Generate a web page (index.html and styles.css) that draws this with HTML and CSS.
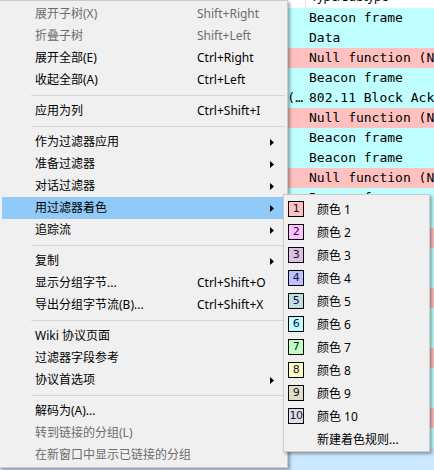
FILE: index.html
```html
<!DOCTYPE html>
<html lang="zh-CN">
<head>
<meta charset="utf-8">
<title>Context menu</title>
<link rel="stylesheet" href="styles.css">
</head>
<body>
<div class="list">
  <div class="header"><span class="hcell">Type/Subtype</span></div>
  <div class="row cyan"><span class="c1"></span><span class="c2">Beacon frame</span></div>
  <div class="row cyan"><span class="c1"></span><span class="c2">Data</span></div>
  <div class="row pink"><span class="c1"></span><span class="c2">Null function (No data)</span></div>
  <div class="row cyan"><span class="c1"></span><span class="c2">Beacon frame</span></div>
  <div class="row cyan"><span class="c1">(…</span><span class="c2">802.11 Block Ack</span></div>
  <div class="row pink"><span class="c1"></span><span class="c2">Null function (No data)</span></div>
  <div class="row cyan"><span class="c1"></span><span class="c2">Beacon frame</span></div>
  <div class="row cyan"><span class="c1"></span><span class="c2">Beacon frame</span></div>
  <div class="row pink"><span class="c1"></span><span class="c2">Null function (No data)</span></div>
  <div class="row cyan"><span class="c1"></span><span class="c2">Beacon frame</span></div>
  <div class="row cyan"></div>
  <div class="row pink"></div>
  <div class="row cyan"></div>
  <div class="row cyan"></div>
  <div class="row pink"></div>
  <div class="row cyan"></div>
  <div class="row cyan"></div>
  <div class="row pink"></div>
  <div class="row cyan"></div>
  <div class="row cyan"></div>
  <div class="row pink"></div>
  <div class="row cyan"></div>
  <div class="row selected"></div>
</div>

<div class="menu main-menu">
  <div class="item disabled"><span class="label">展开子树(X)</span><span class="key">Shift+Right</span></div>
  <div class="item disabled"><span class="label">折叠子树</span><span class="key">Shift+Left</span></div>
  <div class="item"><span class="label">展开全部(E)</span><span class="key">Ctrl+Right</span></div>
  <div class="item"><span class="label">收起全部(A)</span><span class="key">Ctrl+Left</span></div>
  <div class="sep"></div>
  <div class="item"><span class="label">应用为列</span><span class="key">Ctrl+Shift+I</span></div>
  <div class="sep"></div>
  <div class="item"><span class="label">作为过滤器应用</span><span class="key"></span><svg class="arrow" width="4" height="7" viewBox="0 0 4 7"><polygon points="0,0 4,3.5 0,7" fill="#000"/></svg></div>
  <div class="item"><span class="label">准备过滤器</span><span class="key"></span><svg class="arrow" width="4" height="7" viewBox="0 0 4 7"><polygon points="0,0 4,3.5 0,7" fill="#000"/></svg></div>
  <div class="item"><span class="label">对话过滤器</span><span class="key"></span><svg class="arrow" width="4" height="7" viewBox="0 0 4 7"><polygon points="0,0 4,3.5 0,7" fill="#000"/></svg></div>
  <div class="item active"><span class="label">用过滤器着色</span><span class="key"></span><svg class="arrow" width="4" height="7" viewBox="0 0 4 7"><polygon points="0,0 4,3.5 0,7" fill="#000"/></svg></div>
  <div class="item"><span class="label">追踪流</span><span class="key"></span><svg class="arrow" width="4" height="7" viewBox="0 0 4 7"><polygon points="0,0 4,3.5 0,7" fill="#000"/></svg></div>
  <div class="sep"></div>
  <div class="item"><span class="label">复制</span><span class="key"></span><svg class="arrow" width="4" height="7" viewBox="0 0 4 7"><polygon points="0,0 4,3.5 0,7" fill="#000"/></svg></div>
  <div class="item"><span class="label">显示分组字节...</span><span class="key">Ctrl+Shift+O</span></div>
  <div class="item"><span class="label">导出分组字节流(B)...</span><span class="key">Ctrl+Shift+X</span></div>
  <div class="sep"></div>
  <div class="item"><span class="label">Wiki 协议页面</span><span class="key"></span></div>
  <div class="item"><span class="label">过滤器字段参考</span><span class="key"></span></div>
  <div class="item"><span class="label">协议首选项</span><span class="key"></span><svg class="arrow" width="4" height="7" viewBox="0 0 4 7"><polygon points="0,0 4,3.5 0,7" fill="#000"/></svg></div>
  <div class="sep"></div>
  <div class="item"><span class="label">解码为(A)...</span><span class="key"></span></div>
  <div class="item disabled"><span class="label">转到链接的分组(L)</span><span class="key"></span></div>
  <div class="item disabled"><span class="label wide">在新窗口中显示已链接的分组</span></div>
</div>

<div class="menu sub-menu">
  <div class="sitem"><span class="sw c-1">1</span><span>颜色 1</span></div>
  <div class="sitem"><span class="sw c-2">2</span><span>颜色 2</span></div>
  <div class="sitem"><span class="sw c-3">3</span><span>颜色 3</span></div>
  <div class="sitem"><span class="sw c-4">4</span><span>颜色 4</span></div>
  <div class="sitem"><span class="sw c-5">5</span><span>颜色 5</span></div>
  <div class="sitem"><span class="sw c-6">6</span><span>颜色 6</span></div>
  <div class="sitem"><span class="sw c-7">7</span><span>颜色 7</span></div>
  <div class="sitem"><span class="sw c-8">8</span><span>颜色 8</span></div>
  <div class="sitem"><span class="sw c-9">9</span><span>颜色 9</span></div>
  <div class="sitem"><span class="sw c-10">10</span><span>颜色 10</span></div>
  <div class="sitem plain"><span>新建着色规则...</span></div>
</div>
</body>
</html>
```

FILE: styles.css
```css
html, body {
  margin: 0;
  padding: 0;
  width: 434px;
  height: 470px;
  overflow: hidden;
  background: #ffffff;
}

.list {
  display: flex;
  flex-direction: column;
}

.header {
  height: 8px;
  overflow: hidden;
  background: #ffffff;
  display: flex;
}

.hcell {
  margin-left: 305px;
  padding-left: 5px;
  border-left: 1px solid #e5e5e5;
  font: 12px/16px "Noto Sans", sans-serif;
  color: #000;
  margin-top: -11px;
  height: 30px;
}

.row {
  display: flex;
  flex: none;
  height: 20px;
  line-height: 20px;
  font-family: "DejaVu Sans Mono", monospace;
  font-size: 13px;
  color: #000;
  white-space: nowrap;
  overflow: hidden;
}

.row.cyan { background: #c0ffff; }
.row.pink { background: #ffc0c0; }
.row.selected { background: #cce8ff; height: 30px; }

.c1 {
  width: 303px;
  flex: none;
  text-align: right;
  overflow: hidden;
}

.c2 {
  padding-left: 6px;
}

.menu {
  position: absolute;
  box-sizing: border-box;
  background: #f0f0f0;
  border: 1px solid #cccccc;
  box-shadow: 2px 2px 3px rgba(0, 0, 0, 0.35);
  font-family: "Noto Sans", "Noto Sans CJK SC", sans-serif;
  font-size: 12px;
  color: #000;
}

.main-menu {
  left: -1px;
  top: 0;
  width: 289px;
  padding: 2px 0 1px;
  display: flex;
  flex-direction: column;
}

.item {
  display: flex;
  align-items: center;
  height: 22px;
  line-height: 22px;
  margin: 0 2px;
  padding-left: 33px;
  white-space: nowrap;
}

.item.active {
  background: #91c9f7;
}

.item.disabled {
  color: #6d6d6d;
}

.label {
  width: 162px;
  flex: none;
}

.label.wide {
  width: auto;
}

.key {
  flex: 1;
}

.arrow {
  flex: none;
  margin-right: 11px;
}

.sep {
  height: 1px;
  background: #d7d7d7;
  margin: 4px 2px 4px 31px;
}

.sub-menu {
  left: 283px;
  top: 194px;
  width: 147px;
  padding: 2px 0 1px;
  display: flex;
  flex-direction: column;
}

.sitem {
  display: flex;
  align-items: center;
  height: 23px;
  padding-left: 4px;
  white-space: nowrap;
}

.sitem.plain {
  padding-left: 33px;
}

.sw {
  box-sizing: border-box;
  width: 16px;
  height: 16px;
  border: 1px solid #000;
  margin-right: 13px;
  font: 11px/14px "DejaVu Sans", sans-serif;
  text-align: center;
  color: #10104a;
  letter-spacing: -0.5px;
  flex: none;
}

.c-1 { background: #ffc0c0; }
.c-2 { background: #ffc0ff; }
.c-3 { background: #e0c0e0; }
.c-4 { background: #c0c0ff; }
.c-5 { background: #c0e0e0; }
.c-6 { background: #c0ffff; }
.c-7 { background: #c0ffc0; }
.c-8 { background: #ffffc0; }
.c-9 { background: #e0e0c0; }
.c-10 { background: #e0e0e0; }
```
